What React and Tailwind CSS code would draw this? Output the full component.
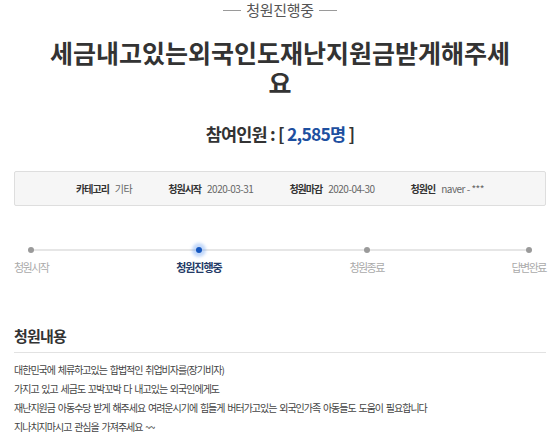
export default function App() {
  const font = { fontFamily: '"Noto Sans CJK KR", "Noto Sans", sans-serif' };
  const steps = [
    { label: "청원시작", active: false },
    { label: "청원진행중", active: true },
    { label: "청원종료", active: false },
    { label: "답변완료", active: false },
  ];
  return (
    <div className="w-[560px] h-[436px] bg-white overflow-hidden" style={font}>
      <div className="mx-[14px] w-[532px]">
        <div className="flex items-center justify-center gap-[5px] h-[20px]">
          <span className="w-[18px] h-px bg-[#9a9a9a]" />
          <span className="text-[15px] leading-[20px] text-[#555] tracking-[-0.3px]">청원진행중</span>
          <span className="w-[18px] h-px bg-[#9a9a9a]" />
        </div>
        <h1 className="mt-[17px] mx-auto w-[480px] text-center text-[25px] leading-[30px] font-bold text-[#333] tracking-[0px]">
          세금내고있는외국인도재난지원금받게해주세요
        </h1>
        <div className="mt-[25px] text-center text-[17.5px] leading-[24px] font-bold text-[#333] tracking-[-0.8px]">
          참여인원 : [ <span className="text-[#1d4fa0]">2,585명</span> ]
        </div>
        <div className="mt-[25px] h-[35px] bg-[#f6f6f6] border border-[#dedede] rounded-[2px] flex items-center justify-center gap-[36px] text-[10px] leading-[14px]">
          <div className="flex items-center gap-[6px]">
            <span className="font-bold text-[#333] tracking-[-1px]">카테고리</span>
            <span className="text-[#666] tracking-[-0.5px]">기타</span>
          </div>
          <div className="flex items-center gap-[6px]">
            <span className="font-bold text-[#333] tracking-[-1px]">청원시작</span>
            <span className="text-[#666] tracking-[-0.5px]">2020-03-31</span>
          </div>
          <div className="flex items-center gap-[6px]">
            <span className="font-bold text-[#333] tracking-[-1px]">청원마감</span>
            <span className="text-[#666] tracking-[-0.5px]">2020-04-30</span>
          </div>
          <div className="flex items-center gap-[6px]">
            <span className="font-bold text-[#333] tracking-[-1px]">청원인</span>
            <span className="text-[#666] tracking-[-0.5px]">naver - ***</span>
          </div>
        </div>
        <div className="relative mt-[41px] flex justify-between">
          <div className="absolute left-[18px] right-[18px] top-[2px] h-[2px] bg-[#e6e6e6]" />
          {steps.map((s) => (
            <div key={s.label} className="relative flex flex-col items-center">
              {s.active ? (
                <span className="w-[6px] h-[6px] rounded-full bg-[#1557c0] shadow-[0_0_3px_4px_rgba(90,150,240,0.35)]" />
              ) : (
                <span className="w-[6px] h-[6px] rounded-full bg-[#9a9a9a]" />
              )}
              <span
                className={
                  s.active
                    ? "mt-[6px] text-[11px] leading-[16px] font-bold text-[#243a66] tracking-[-1px]"
                    : "mt-[6px] text-[11px] leading-[16px] text-[#aaa] tracking-[-1.5px]"
                }
              >
                {s.label}
              </span>
            </div>
          ))}
        </div>
        <h2 className="mt-[51px] text-[15px] leading-[20px] font-bold text-[#333] tracking-[-0.8px] pb-[6px] border-b border-[#e2e2e2]">
          청원내용
        </h2>
        <div className="pt-[7px] text-[10px] leading-[19px] text-[#444] tracking-[-1px] [word-spacing:1.5px]">
          <p>대한민국에 체류하고있는 합법적인 취업비자를(장기비자)</p>
          <p>가지고 있고 세금도 꼬박꼬박 다 내고있는 외국인에게도</p>
          <p>재난지원금 아동수당 받게 해주세요 여려운시기에 힘들게 버터가고있는 외국인가족 아동들도 도움이 필요합니다</p>
          <p>지나치지마시고 관심을 가져주세요 ~~</p>
        </div>
      </div>
    </div>
  );
}
